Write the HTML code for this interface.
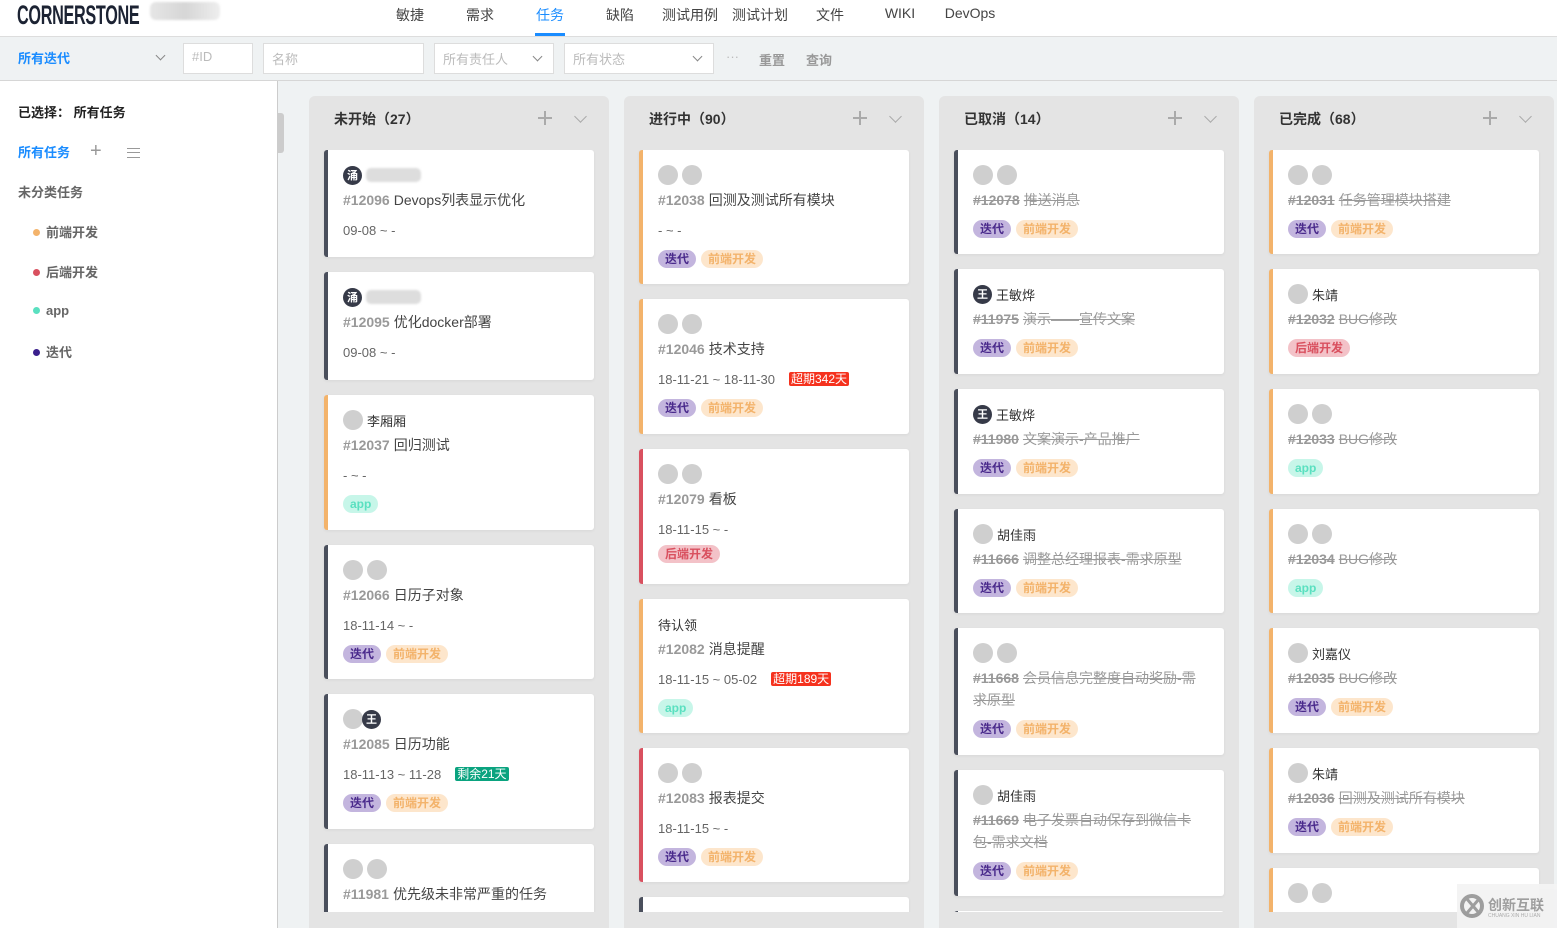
<!DOCTYPE html>
<html><head><meta charset="utf-8">
<style>
*{box-sizing:border-box;margin:0;padding:0}
html,body{width:1557px;height:928px;overflow:hidden}
body{position:relative;background:#eff2f3;font-family:"Liberation Sans","Noto Sans CJK SC",sans-serif;color:#333}
.hdr{position:absolute;left:0;top:0;width:1557px;height:37px;background:#fff;border-bottom:1px solid #ddd}
.logo{position:absolute;left:17px;top:0px;font-family:"Liberation Sans Narrow","Liberation Sans",sans-serif;font-weight:bold;font-size:27px;line-height:30px;color:#1c2333;letter-spacing:-0.5px;transform:scaleX(.6);transform-origin:left}
.blur{position:absolute;left:150px;top:2px;width:70px;height:18px;background:linear-gradient(90deg,#e6e6e6,#d6d6d6,#eee);border-radius:6px;filter:blur(1px)}
.nav{position:absolute;top:5px;font-size:14px;color:#444;transform:translateX(-50%);white-space:nowrap}
.nav.on{color:#1a8cff}
.uline{position:absolute;left:535px;top:33px;width:30px;height:3px;background:#1a8cff}
.fbar{position:absolute;left:0;top:37px;width:1557px;height:44px;background:#eff2f3;border-bottom:1px solid #d6d6d6}
.inp{position:absolute;top:6px;height:31px;background:#fff;border:1px solid #ddd;font-size:13px;color:#bbb;padding:5px 8px}
.chev{position:absolute;width:7px;height:7px;border-right:1.3px solid #888;border-bottom:1.3px solid #888;transform:rotate(45deg)}
.side{position:absolute;left:0;top:81px;width:278px;height:847px;background:#fff;border-right:1px solid #ccc}
.side div{position:absolute;font-size:13px;white-space:nowrap}
.dot{display:inline-block;width:7px;height:7px;border-radius:50%;margin-right:6px;vertical-align:1px}
.handle{position:absolute;left:277px;top:113px;width:7px;height:40px;background:#ccc;border-radius:0 3px 3px 0}
.col{position:absolute;top:96px;width:300px;height:832px;background:#e4e4e4;border-radius:6px 6px 0 0;overflow:hidden}
.ch{position:absolute;left:25px;top:13px;font-size:14px;font-weight:bold;color:#333}
.plus{position:absolute;left:229px;top:15px;width:14px;height:14px}
.plus:before{content:"";position:absolute;left:0;top:6px;width:14px;height:1.5px;background:#aaa}
.plus:after{content:"";position:absolute;left:6px;top:0;width:1.5px;height:14px;background:#aaa}
.cchev{position:absolute;left:267px;top:16px;width:9px;height:9px;border-right:1.5px solid #aaa;border-bottom:1.5px solid #aaa;transform:rotate(45deg)}
.clip{position:absolute;left:0;top:54px;width:300px;height:762px;overflow:hidden}
.card{position:absolute;left:15px;width:270px;background:#fff;border-radius:3px;border-left:4px solid #4a4f5c;padding:15px 0 0 15px;box-shadow:0 1px 3px rgba(0,0,0,.06)}
.o{border-left-color:#f3b36b}.r{border-left-color:#d9505f}
.av{height:20px;display:flex;align-items:center;font-size:13px;color:#333}
.c{width:20px;height:20px;border-radius:50%;background:#cfcfcf;display:inline-block;margin-right:-1px;flex:none}
.d{width:19px;height:19px;border-radius:50%;background:#363a48;color:#fff;font-size:11px;font-weight:bold;display:inline-flex;align-items:center;justify-content:center;margin-right:4px;flex:none}
.av .c+span{margin-left:5px}
.t{margin-top:4px;line-height:22px;font-size:14px;color:#444;padding-right:15px}
.t b{color:#999;margin-right:4px}
.s{text-decoration:line-through;color:#999}
.dt{margin-top:9px;line-height:22px;font-size:13px;color:#666}
.tags{margin-top:8px;height:18px;display:flex;gap:5px}
.tags.n{margin-top:9px}
.g{height:18px;line-height:18px;font-size:12px;font-weight:bold;padding:0 7px;border-radius:9px}
.it{background:#c3b5de;color:#4a2a8c}.fe{background:#fde6cc;color:#f3b36b}.be{background:#f3c2c8;color:#d9505f}.ap{background:#c7f6e9;color:#5ae0c0}
.bad{display:inline-block;color:#fff;font-size:12px;line-height:14px;padding:0 2px;border-radius:2px;margin-left:14px;vertical-align:1px}
.wm{position:absolute;left:1457px;top:884px;width:100px;height:44px;background:#f3f3f3;opacity:.95}
</style></head><body>
<div class="hdr">
<div class="logo">CORNERSTONE</div><div class="blur"></div>
<div class="nav" style="left:410px">敏捷</div>
<div class="nav" style="left:480px">需求</div>
<div class="nav on" style="left:550px">任务</div>
<div class="nav" style="left:620px">缺陷</div>
<div class="nav" style="left:690px">测试用例</div>
<div class="nav" style="left:760px">测试计划</div>
<div class="nav" style="left:830px">文件</div>
<div class="nav" style="left:900px">WIKI</div>
<div class="nav" style="left:970px">DevOps</div>
<div class="uline"></div>
</div>
<div class="fbar">
<div style="position:absolute;left:18px;top:11px;font-size:13px;font-weight:bold;color:#1a8cff">所有迭代</div>
<div class="chev" style="left:157px;top:15px"></div>
<div class="inp" style="left:183px;width:70px">#ID</div>
<div class="inp" style="left:263px;width:161px">名称</div>
<div class="inp" style="left:434px;width:120px">所有责任人<div class="chev" style="left:99px;top:9px"></div></div>
<div class="inp" style="left:564px;width:150px">所有状态<div class="chev" style="left:129px;top:9px"></div></div>
<div style="position:absolute;left:726px;top:12px;font-size:13px;color:#bbb">···</div>
<div style="position:absolute;left:759px;top:13px;font-size:13px;font-weight:bold;color:#999">重置</div>
<div style="position:absolute;left:806px;top:13px;font-size:13px;font-weight:bold;color:#999">查询</div>
</div>
<div class="side">
<div style="left:18px;top:21px;font-weight:bold;color:#222">已选择：&nbsp;所有任务</div>
<div style="left:18px;top:61px;font-weight:bold;color:#1a8cff">所有任务</div>
<div style="left:90px;top:62px;font-size:20px;line-height:16px;color:#999;font-weight:300">+</div>
<div style="left:127px;top:67px;width:13px;height:10px;border-top:1.5px solid #999;border-bottom:1.5px solid #999"><div style="left:0;top:2.5px;width:13px;height:1.5px;background:#999"></div></div>
<div style="left:18px;top:101px;font-weight:bold;color:#666">未分类任务</div>
<div style="left:33px;top:141px;font-weight:bold;color:#666"><span class="dot" style="background:#f3b36b"></span>前端开发</div>
<div style="left:33px;top:181px;font-weight:bold;color:#666"><span class="dot" style="background:#d9505f"></span>后端开发</div>
<div style="left:33px;top:222px;font-weight:bold;color:#666"><span class="dot" style="background:#5ae0c0"></span>app</div>
<div style="left:33px;top:261px;font-weight:bold;color:#666"><span class="dot" style="background:#3a1f8c"></span>迭代</div>
</div>
<div class="handle"></div>

<div class="col" style="left:309px"><div class="ch">未开始（27）</div><div class="plus"></div><div class="cchev"></div>
<div class="clip">
<div class="card" style="top:0;height:107px"><div class="av"><span class="d">涌</span><span style="width:55px;height:14px;background:#ddd;border-radius:5px;filter:blur(1px)"></span></div><div class="t"><b>#12096</b>Devops列表显示优化</div><div class="dt">09-08 ~ -</div></div>
<div class="card" style="top:122px;height:108px"><div class="av"><span class="d">涌</span><span style="width:55px;height:14px;background:#ddd;border-radius:5px;filter:blur(1px)"></span></div><div class="t"><b>#12095</b>优化docker部署</div><div class="dt">09-08 ~ -</div></div>
<div class="card o" style="top:245px;height:135px"><div class="av"><span class="c"></span><span>李厢厢</span></div><div class="t"><b>#12037</b>回归测试</div><div class="dt">- ~ -</div><div class="tags"><span class="g ap">app</span></div></div>
<div class="card" style="top:395px;height:134px"><div class="av"><span class="c"></span><span class="c"></span></div><div class="t"><b>#12066</b>日历子对象</div><div class="dt">18-11-14 ~ -</div><div class="tags"><span class="g it">迭代</span><span class="g fe">前端开发</span></div></div>
<div class="card" style="top:544px;height:135px"><div class="av"><span class="c"></span><span class="d" style="margin-left:0">王</span></div><div class="t"><b>#12085</b>日历功能</div><div class="dt">18-11-13 ~ 11-28<span class="bad" style="background:#0aa37f">剩余21天</span></div><div class="tags"><span class="g it">迭代</span><span class="g fe">前端开发</span></div></div>
<div class="card" style="top:694px;height:134px"><div class="av"><span class="c"></span><span class="c"></span></div><div class="t"><b>#11981</b>优先级未非常严重的任务</div></div>
</div></div>

<div class="col" style="left:624px"><div class="ch">进行中（90）</div><div class="plus"></div><div class="cchev"></div>
<div class="clip">
<div class="card o" style="top:0;height:134px"><div class="av"><span class="c"></span><span class="c"></span></div><div class="t"><b>#12038</b>回测及测试所有模块</div><div class="dt">- ~ -</div><div class="tags"><span class="g it">迭代</span><span class="g fe">前端开发</span></div></div>
<div class="card o" style="top:149px;height:135px"><div class="av"><span class="c"></span><span class="c"></span></div><div class="t"><b>#12046</b>技术支持</div><div class="dt">18-11-21 ~ 18-11-30<span class="bad" style="background:#f5321e">超期342天</span></div><div class="tags"><span class="g it">迭代</span><span class="g fe">前端开发</span></div></div>
<div class="card r" style="top:299px;height:135px"><div class="av"><span class="c"></span><span class="c"></span></div><div class="t"><b>#12079</b>看板</div><div class="dt">18-11-15 ~ -</div><div class="tags n" style="margin-top:4px"><span class="g be">后端开发</span></div></div>
<div class="card o" style="top:449px;height:134px"><div class="av"><span>待认领</span></div><div class="t"><b>#12082</b>消息提醒</div><div class="dt">18-11-15 ~ 05-02<span class="bad" style="background:#f5321e">超期189天</span></div><div class="tags"><span class="g ap">app</span></div></div>
<div class="card r" style="top:598px;height:134px"><div class="av"><span class="c"></span><span class="c"></span></div><div class="t"><b>#12083</b>报表提交</div><div class="dt">18-11-15 ~ -</div><div class="tags"><span class="g it">迭代</span><span class="g fe">前端开发</span></div></div>
<div class="card" style="top:747px;height:134px"></div>
</div></div>

<div class="col" style="left:939px"><div class="ch">已取消（14）</div><div class="plus"></div><div class="cchev"></div>
<div class="clip">
<div class="card" style="top:0;height:104px"><div class="av"><span class="c"></span><span class="c"></span></div><div class="t s"><b>#12078</b>推送消息</div><div class="tags n"><span class="g it">迭代</span><span class="g fe">前端开发</span></div></div>
<div class="card" style="top:119px;height:105px"><div class="av"><span class="d">王</span><span>王敏烨</span></div><div class="t s"><b>#11975</b>演示——宣传文案</div><div class="tags n"><span class="g it">迭代</span><span class="g fe">前端开发</span></div></div>
<div class="card" style="top:239px;height:105px"><div class="av"><span class="d">王</span><span>王敏烨</span></div><div class="t s"><b>#11980</b>文案演示-产品推广</div><div class="tags n"><span class="g it">迭代</span><span class="g fe">前端开发</span></div></div>
<div class="card" style="top:359px;height:104px"><div class="av"><span class="c"></span><span>胡佳雨</span></div><div class="t s"><b>#11666</b>调整总经理报表-需求原型</div><div class="tags n"><span class="g it">迭代</span><span class="g fe">前端开发</span></div></div>
<div class="card" style="top:478px;height:127px"><div class="av"><span class="c"></span><span class="c"></span></div><div class="t s"><b>#11668</b>会员信息完整度自动奖励-需求原型</div><div class="tags n"><span class="g it">迭代</span><span class="g fe">前端开发</span></div></div>
<div class="card" style="top:620px;height:126px"><div class="av"><span class="c"></span><span>胡佳雨</span></div><div class="t s"><b>#11669</b>电子发票自动保存到微信卡包-需求文档</div><div class="tags n"><span class="g it">迭代</span><span class="g fe">前端开发</span></div></div>
<div class="card" style="top:761px;height:104px"></div>
</div></div>

<div class="col" style="left:1254px"><div class="ch">已完成（68）</div><div class="plus"></div><div class="cchev"></div>
<div class="clip">
<div class="card o" style="top:0;height:104px"><div class="av"><span class="c"></span><span class="c"></span></div><div class="t s"><b>#12031</b>任务管理模块搭建</div><div class="tags n"><span class="g it">迭代</span><span class="g fe">前端开发</span></div></div>
<div class="card o" style="top:119px;height:105px"><div class="av"><span class="c"></span><span>朱靖</span></div><div class="t s"><b>#12032</b>BUG修改</div><div class="tags n"><span class="g be">后端开发</span></div></div>
<div class="card o" style="top:239px;height:105px"><div class="av"><span class="c"></span><span class="c"></span></div><div class="t s"><b>#12033</b>BUG修改</div><div class="tags n"><span class="g ap">app</span></div></div>
<div class="card o" style="top:359px;height:104px"><div class="av"><span class="c"></span><span class="c"></span></div><div class="t s"><b>#12034</b>BUG修改</div><div class="tags n"><span class="g ap">app</span></div></div>
<div class="card o" style="top:478px;height:105px"><div class="av"><span class="c"></span><span>刘嘉仪</span></div><div class="t s"><b>#12035</b>BUG修改</div><div class="tags n"><span class="g it">迭代</span><span class="g fe">前端开发</span></div></div>
<div class="card o" style="top:598px;height:105px"><div class="av"><span class="c"></span><span>朱靖</span></div><div class="t s"><b>#12036</b>回测及测试所有模块</div><div class="tags n"><span class="g it">迭代</span><span class="g fe">前端开发</span></div></div>
<div class="card o" style="top:718px;height:105px"><div class="av"><span class="c"></span><span class="c"></span></div></div>
</div></div>

<div class="wm"><svg width="100" height="44" style="position:absolute;left:0;top:0"><circle cx="15" cy="22" r="10" fill="none" stroke="#999" stroke-width="4"/><path d="M10 15 L22 29 M22 15 L10 29" stroke="#999" stroke-width="3"/></svg>
<div style="position:absolute;left:31px;top:11px;font-size:14px;font-weight:bold;color:#999">创新互联</div>
<div style="position:absolute;left:31px;top:29px;font-size:5px;color:#aaa">CHUANG XIN HU LIAN</div></div>
</body></html>
